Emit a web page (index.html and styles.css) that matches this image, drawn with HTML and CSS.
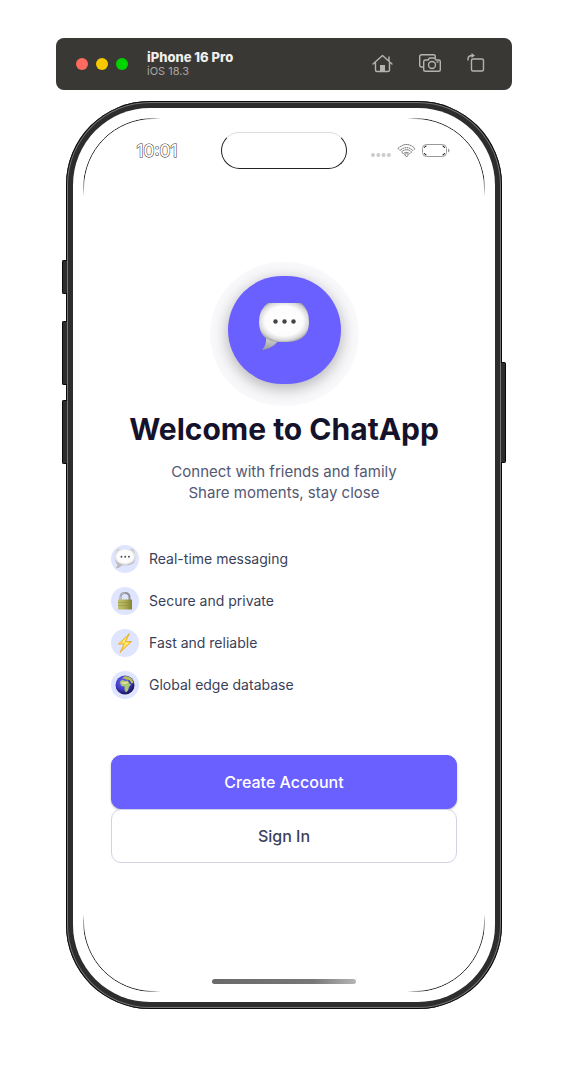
FILE: index.html
```html
<!DOCTYPE html>
<html lang="en">
<head>
<meta charset="utf-8">
<meta name="viewport" content="width=device-width, initial-scale=1">
<title>Welcome to ChatApp</title>
<link rel="stylesheet" href="styles.css">
</head>
<body>
<svg class="defs" width="0" height="0" aria-hidden="true">
  <defs>
    <radialGradient id="bubble" cx=".5" cy=".46" r=".58">
      <stop offset="0" stop-color="#fff"/><stop offset=".66" stop-color="#fcfcfc"/><stop offset=".86" stop-color="#d8d8d8"/><stop offset="1" stop-color="#969696"/>
    </radialGradient>
    <linearGradient id="tail" x1="0" y1="0" x2="0" y2="1">
      <stop offset="0" stop-color="#dcdcdc"/><stop offset="1" stop-color="#9a9a9a"/>
    </linearGradient>
    <linearGradient id="brass" x1="0" y1="0" x2="1" y2="0">
      <stop offset="0" stop-color="#c0c072"/><stop offset=".5" stop-color="#adad56"/><stop offset="1" stop-color="#82822e"/>
    </linearGradient>
    <radialGradient id="ocean" cx=".4" cy=".35" r=".65">
      <stop offset="0" stop-color="#6b67f5"/><stop offset=".6" stop-color="#4038c8"/><stop offset="1" stop-color="#191458"/>
    </radialGradient>
    <symbol id="speech" viewBox="0 0 52 48">
      <path d="M8 34Q9 42 4 47Q14 46 20 38Z" fill="url(#tail)"/>
      <path d="M10 0H43Q51 6 51 19C51 34 41 39 27 39H22C8 39 1 32 1 19Q1 6 10 0Z" fill="url(#bubble)"/>
      <g fill="#444"><circle cx="17.500" cy="18.500" r="2.200"/><circle cx="26.500" cy="18.500" r="2.200"/><circle cx="35.500" cy="18.500" r="2.200"/></g>
    </symbol>
  </defs>
</svg>

<main class="simulator">
  <header class="toolbar">
    <div class="lights" aria-hidden="true"><i class="light red"></i><i class="light yellow"></i><i class="light green"></i></div>
    <div class="device-name"><strong>iPhone 16 Pro</strong><span>iOS 18.3</span></div>
    <div class="tools">
      <button class="tool" type="button" aria-label="Home">
        <svg viewBox="0 0 22 20" width="22" height="20"><path d="M2 10L11.500 1.500L21 10M4.500 8.500V16Q4.500 17.500 6 17.500H17Q18.500 17.500 18.500 16V8.500M18 7V3"/><path class="solid" d="M9 17.500V11H14V17.500Z"/></svg>
      </button>
      <button class="tool" type="button" aria-label="Screenshot">
        <svg viewBox="0 0 22 20" width="22" height="20"><path d="M4 13H2.500Q.700 13 .700 11V2.500Q.700 .700 2.500 .700H14.500Q16.300 .700 16.300 2.500V3.500"/><path d="M6.500 6H9L10.500 4H15.500L17 6H19.500Q21.300 6 21.300 7.500V15.500Q21.300 17.300 19.500 17.300H6.500Q4.700 17.300 4.700 15.500V7.500Q4.700 6 6.500 6Z"/><circle cx="13" cy="11" r="3.500"/><path d="M18 8H19"/></svg>
      </button>
      <button class="tool" type="button" aria-label="Rotate">
        <svg viewBox="0 0 22 20" width="22" height="20"><rect x="4.500" y="5" width="12" height="12" rx="1.500"/><path d="M1 6V5Q1 1.500 5.500 1.500"/><path class="solid" d="M4.500-1L8 1.500L4.500 4Z"/></svg>
      </button>
    </div>
  </header>

  <section class="device">
    <i class="side-button action"></i><i class="side-button volume-up"></i><i class="side-button volume-down"></i><i class="side-button power"></i>
    <div class="screen">
      <div class="status">
        <time class="clock">10:01</time>
        <div class="island"></div>
        <div class="indicators" aria-hidden="true">
          <svg viewBox="0 0 80 16" width="80" height="16" fill="none">
            <g fill="#ccc"><circle cx="2" cy="12" r="2"/><circle cx="7.300" cy="12" r="2"/><circle cx="12.600" cy="12" r="2"/><circle cx="17.900" cy="12" r="2"/></g>
            <path d="M27 5.500Q35.500-2.500 44 5.500L42 7.500Q35.500 1.800 29 7.500ZM30.500 9Q35.500 4.500 40.500 9L38.700 10.700Q35.500 8 32.300 10.700ZM33.500 11.500Q35.500 10 37.500 11.500L35.500 14Z" stroke="#333" stroke-width=".8" stroke-dasharray="1.500 .6"/>
            <rect x="51.500" y="1.500" width="24" height="12" rx="4" stroke="#999"/>
            <path d="M53.500 5V4.500Q53.500 3 55.500 3M71.500 3Q73.500 3 73.500 5M53.500 10Q53.500 12 55.500 12M71.500 12Q73.500 12 73.500 10" stroke="#111"/>
            <path d="M77 5.500Q78.500 6 78.500 7.500T77 9.500Z" fill="#999"/>
          </svg>
        </div>
      </div>

      <div class="welcome">
        <div class="logo"><svg width="52" height="48" aria-hidden="true"><use href="#speech"/></svg></div>
        <h1 class="title">Welcome to ChatApp</h1>
        <p class="subtitle">Connect with friends and family<br>Share moments, stay close</p>
        <ul class="features">
          <li class="feature"><span class="badge"><svg width="22" height="20"><use href="#speech"/></svg></span>Real-time messaging</li>
          <li class="feature"><span class="badge">
            <svg viewBox="0 0 20 20" width="20" height="20"><path d="M5.500 10V6.500Q5.500 2 10 2T14.500 6.500V10" fill="none" stroke="#8f929c" stroke-width="2"/><path d="M5.500 10V6.500Q5.500 2 10 2" fill="none" stroke="#c4c6cc"/><rect x="3" y="8.500" width="14" height="10" rx=".5" fill="url(#brass)"/><path d="M3 11.500H17M3 14.500H17" stroke="#8e8e3a" stroke-width=".5"/></svg>
          </span>Secure and private</li>
          <li class="feature"><span class="badge">
            <svg viewBox="0 0 20 20" width="20" height="20"><path d="M14.500 .500L3.500 11H9L5 19.500L16.500 8.500H10.500Z" fill="#ffd83a" stroke="#e3a51c" stroke-width=".8"/><path d="M12 4L7 9.700H11L8.500 14.500L13.500 9.500H8.800Z" fill="#fff29a"/></svg>
          </span>Fast and reliable</li>
          <li class="feature"><span class="badge">
            <svg viewBox="0 0 20 20" width="20" height="20"><circle cx="10" cy="10" r="9.500" fill="url(#ocean)"/><path d="M5 8Q5 5 8 5L10 6L13 5.500L14 8L16 9.500L14 12L13 15.500L11 17.500L9.500 15L9.500 11.500L6.500 11Z" fill="#a8c973"/><path d="M7 4L9 1.500Q14 .5 17 4L18.500 8L16.500 8.500L14.500 5L11 4.500L9 3.500Z" fill="#b9bf52"/><path d="M7 7H13L12 9H7Z" fill="#e2dc9b"/></svg>
          </span>Global edge database</li>
        </ul>
        <div class="actions">
          <button class="button primary" type="button">Create Account</button>
          <button class="button secondary" type="button">Sign In</button>
        </div>
      </div>
      <div class="home-indicator"></div>
    </div>
  </section>
</main>
</body>
</html>
```
FILE: styles.css
```css
* { box-sizing: border-box; }

body {
  margin: 0;
  background: #fff;
  color: #3a3f5a;
  font-family: Inter, "Liberation Sans", sans-serif;
}

.defs { position: absolute; }

.simulator { padding: 38px 56px 75px; }

.toolbar {
  display: flex;
  align-items: center;
  height: 52px;
  padding: 0 23px 0 20px;
  border-radius: 8px;
  background: #3a3834;
}

.lights { display: flex; gap: 8px; margin-right: 19px; }
.light { width: 12px; height: 12px; border-radius: 50%; }
.red { background: #ff6a5e; }
.yellow { background: #f6c900; }
.green { background: #00d300; }

.device-name { display: flex; flex-direction: column; }
.device-name strong { color: #f0efed; font-size: 13px; line-height: 15px; font-weight: 800; }
.device-name span { color: #aaa8a5; font-size: 11px; line-height: 13px; }

.tools { display: flex; gap: 26px; margin-left: auto; }
.tool { display: flex; padding: 0; border: 0; background: none; }
.tool svg { overflow: visible; fill: none; stroke: #b5b3b0; stroke-width: 1.4; stroke-linejoin: round; stroke-linecap: round; }
.tool .solid { fill: #b5b3b0; stroke: none; }

.device {
  position: relative;
  margin: 11px 10px 0;
  padding: 7px;
  border-radius: 84px;
  background: #2d2d2d;
  box-shadow: inset 0 0 0 1px #080808, inset 0 0 0 2px #777;
}

.side-button {
  position: absolute;
  left: -4px;
  width: 5px;
  border: 1px solid #080808;
  border-right: 0;
  border-radius: 2px 0 0 2px;
  background: #2d2d2d;
}
.action { top: 159px; height: 34px; }
.volume-up { top: 220px; height: 64px; }
.volume-down { top: 299px; height: 64px; }
.power {
  top: 261px;
  right: -4px;
  left: auto;
  height: 101px;
  border: 1px solid #080808;
  border-left: 0;
  border-radius: 0 2px 2px 0;
}

.screen {
  position: relative;
  padding: 24px 38px 18px;
  border-radius: 77px;
  background: #fff;
}

/* Hairline that shows only around the display corners. */
.screen::before {
  content: "";
  position: absolute;
  inset: 10px;
  border: 1px solid #222;
  border-radius: 70px;
  pointer-events: none;
  mask-image:
    linear-gradient(90deg, #000 58px, transparent 78px, transparent calc(100% - 78px), #000 calc(100% - 58px)),
    linear-gradient(#000 58px, transparent 78px, transparent calc(100% - 78px), #000 calc(100% - 58px));
  mask-composite: intersect;
}

.status {
  display: grid;
  grid-template-columns: 1fr 126px 1fr;
  align-items: center;
  justify-items: center;
  margin: 0 -18px;
}
.clock {
  color: #fff;
  font-size: 17px;
  line-height: 20px;
  font-weight: 500;
  -webkit-text-stroke: 1px #333;
  paint-order: stroke fill;
}
.island {
  width: 100%;
  height: 37px;
  border: 1px solid #222;
  border-top-color: #ddd;
  border-radius: 19px;
}
.indicators { display: flex; }

.welcome { display: flex; flex-direction: column; align-items: center; padding-top: 107px; }

.logo {
  display: flex;
  align-items: center;
  justify-content: center;
  width: 113px;
  height: 108px;
  padding-bottom: 6px;
  border-radius: 54px;
  background: #6a60ff;
  box-shadow: 0 4px 16px rgba(0, 0, 0, .3), 0 4px 0 18px #f9f9fc;
}

.title { margin: 25px 0 0; color: #15122b; font-size: 30px; line-height: 40px; font-weight: 700; white-space: nowrap; }
.subtitle { margin: 12px 0 0; color: #535872; font-size: 15px; line-height: 21px; text-align: center; }

.features { display: grid; gap: 14px; align-self: stretch; margin: 42px 0 0; padding: 0; list-style: none; }
.feature { display: flex; align-items: center; gap: 10px; font-size: 14px; line-height: 20px; }
.badge { display: flex; align-items: center; justify-content: center; width: 28px; height: 28px; border-radius: 50%; background: #dfe5ff; }

.actions { display: grid; align-self: stretch; margin-top: 56px; }
.button { padding: 16px; border: 1px solid; border-radius: 10px; font: 500 16px/20px Inter, "Liberation Sans", sans-serif; }
.primary { border-color: #6a60ff; background: #6a60ff; color: #fff; box-shadow: 0 1px 2px rgba(0, 0, 0, .3); }
.secondary { border-color: #d0d3e5; background: #fff; color: #3a3f5a; }

.home-indicator {
  width: 144px;
  height: 5px;
  margin: 116px auto 0;
  border-radius: 3px;
  background: linear-gradient(90deg, #6a6a6a, #777 70%, #b5b5b5);
}
```
